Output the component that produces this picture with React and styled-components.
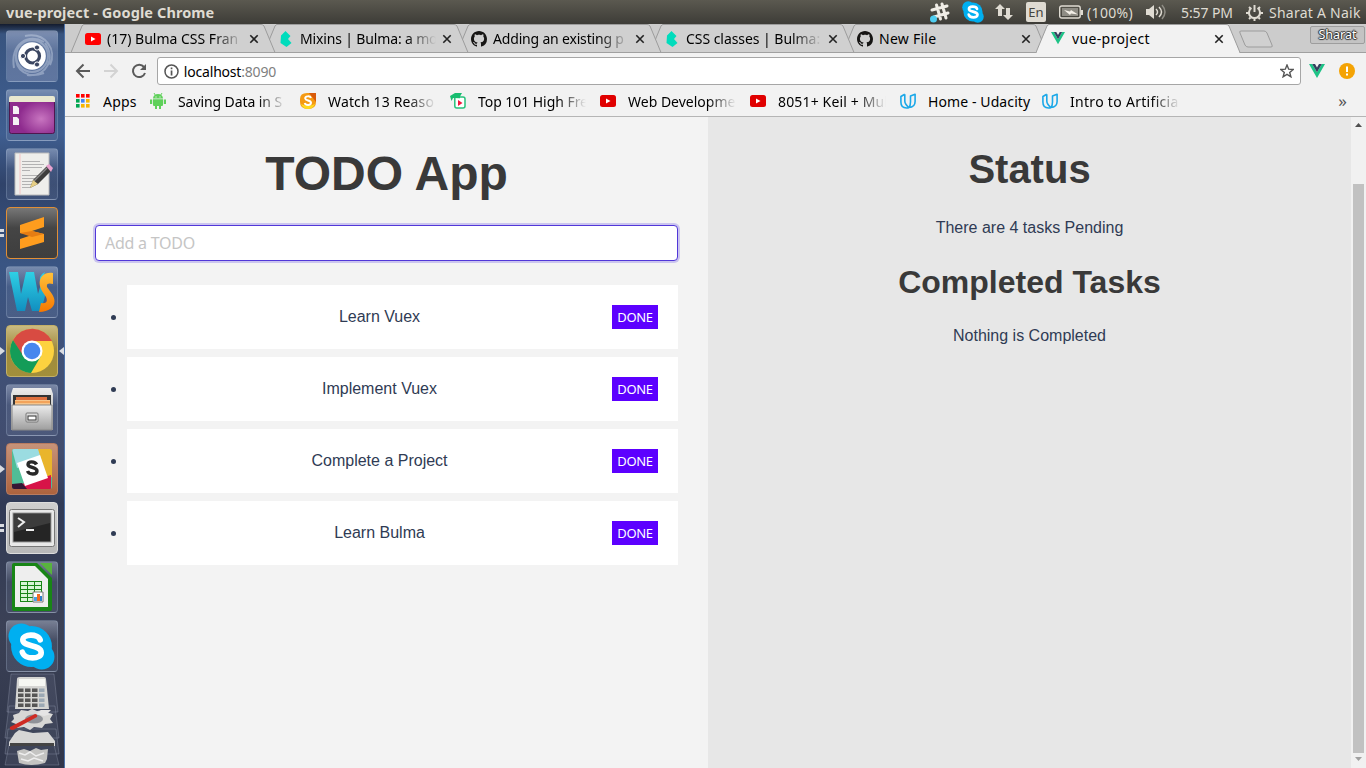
import React from "react";
import styled, { createGlobalStyle } from "styled-components";

const Global = createGlobalStyle`
  * { box-sizing: border-box; }
  html, body { margin: 0; padding: 0; overflow: hidden; }
  body { width: 1366px; height: 768px; font-family: "Noto Sans", "Open Sans", sans-serif; }
  svg { display: block; flex: none; }
`;

const Desktop = styled.div`
  width: 1366px; height: 768px; display: flex; flex-direction: column; overflow: hidden;
`;
const MenuBar = styled.header`
  height: 24px; flex: none; display: flex; align-items: center; padding: 0 5px 0 6px;
  background: linear-gradient(#5b5950, #3d3c37); color: #dfdbd2; font-size: 14px; white-space: nowrap;
`;
const WindowTitle = styled.div`
  font-weight: 700; flex: 1; letter-spacing: 0.1px; font-size: 14.5px; line-height: 24px;
`;
const Indicator = styled.div`
  display: flex; align-items: center; margin-left: ${(p) => p.$gap}px;
  width: ${(p) => p.$w}px; letter-spacing: ${(p) => p.$ls || 0}px; font-size: 14px;
`;
const Keyboard = styled.div`
  width: 20px; height: 20px; margin-left: 13px; border-radius: 2px; background: #dfdbd2; color: #45443e;
  font-size: 13px; line-height: 21px; text-align: center;
`;
const Body = styled.div`display: flex; flex: 1; min-height: 0;`;

const Launcher = styled.nav`
  width: 65px; flex: none; display: flex; flex-direction: column; align-items: center; padding: 6px 1px 0 0;
  gap: 7px; overflow: hidden; border-right: 1px solid #4c72aa;
  background: linear-gradient(#141c2e 0, #38547f 10px, #3f5e90 110px, #30436a 160px, #3a5583 240px, #405076 350px, #414c6d 430px, #303a56 480px, #3b4156 600px, #30364a 744px);
`;
const Tile = styled.div`
  position: relative; width: 52px; height: 52px; flex: none; border-radius: 4px;
  border: 1px solid ${(p) => p.$edge || "rgba(190,205,230,.24)"};
  background: ${(p) => p.$bg || "linear-gradient(rgba(205,215,235,.42), rgba(140,155,185,.14) 40%, rgba(140,155,185,.16))"};
  display: flex; align-items: center; justify-content: center;
`;
const Running = styled.i`
  position: absolute; left: -7px; top: 21px; width: 0; height: 0;
  border: 4px solid transparent; border-left: 5px solid #d9dce2; border-right: 0;
`;
const Focused = styled(Running)`
  left: auto; right: -7px; border-left: 0; border-right: 5px solid #d9dce2;
`;
const Windows = styled.i`
  position: absolute; left: -7px; top: 21px; width: 4px; height: 8px;
  border-top: 3px solid #d9dce2; border-bottom: 3px solid #d9dce2;
`;
const Stack = styled.div`margin-top: -6px;`;

const Browser = styled.main`flex: 1; display: flex; flex-direction: column; min-width: 0;`;
const TabStrip = styled.div`
  position: relative; height: 29px; flex: none; display: flex; background: #cccccc; padding-left: 6px;
  box-shadow: inset 0 -1px #a0a0a0;
`;
const TabBox = styled.div`
  position: relative; z-index: ${(p) => p.$z}; width: 205px; height: 29px; margin-right: -12px; flex: none;
  display: flex; align-items: center; padding: 0 16px 0 14px;
`;
const TabShape = styled.svg`position: absolute; left: 0; top: 0;`;
const Favicon = styled.div`position: relative; width: 16px; margin-right: 6px; display: flex; justify-content: center;`;
const fade = (from) => `-webkit-mask-image: linear-gradient(90deg, #000 ${from}, transparent);`;
const TabTitle = styled.div`
  position: relative; width: 136px; overflow: hidden; white-space: nowrap; color: #000; font-size: 14px;
  letter-spacing: ${(p) => p.$ls}px; ${(p) => (p.$fade ? fade("78%") : "")}
`;
const Cross = styled.svg`position: relative; margin-left: 6px;`;
const NewTab = styled.svg`margin: 6px 0 0 9px;`;
const Profile = styled.div`
  margin: 2px 1px 0 auto; width: 55px; height: 18px; border: 1px solid #9d9d9d; border-radius: 2px; background: #c3c3c3;
  font-size: 12.5px; line-height: 16px; text-align: center; color: #fff;
  text-shadow: 0 0 1px #333, 1px 0 1px #333, -1px 0 1px #333, 0 1px 1px #333, 0 -1px 1px #333;
`;
const Toolbar = styled.div`
  height: 35px; flex: none; display: flex; align-items: center; background: #f2f2f2; padding: 1px 10px 0;
`;
const NavIcons = styled.div`display: flex; gap: 12px; width: 82px;`;
const Address = styled.div`
  width: 1146px; height: 28px; border: 1px solid #a6a6a6; border-radius: 3px; background: #fff;
  display: flex; align-items: center; padding: 0 6px; margin-right: 8px;
`;
const Url = styled.div`
  flex: 1; margin-left: 5px; font-size: 14px; letter-spacing: -0.2px; color: #000;
  span { color: #808080; }
`;
const Bookmarks = styled.div`
  height: 29px; flex: none; display: flex; align-items: center; background: #f2f2f2; padding: 0 19px 2px 11px;
  border-bottom: 1px solid #b5b5b5; white-space: nowrap; font-size: 14px; color: #000;
`;
const Bookmark = styled.div`
  display: flex; align-items: center; gap: ${(p) => p.$inner || 12}px; margin-right: ${(p) => p.$gap}px; height: 26px;
`;
const BookmarkText = styled.div`
  width: ${(p) => p.$w}px; overflow: hidden; letter-spacing: ${(p) => p.$ls}px; ${(p) => (p.$fade ? fade("74%") : "")}
`;
const More = styled.div`margin-left: auto; color: #555; font-size: 17px; line-height: 24px;`;

const Page = styled.div`
  flex: 1; min-height: 0; display: flex; font-family: "Liberation Sans", Arial, sans-serif; font-size: 16px; line-height: 24px;
  color: #2f3b54; text-align: center; letter-spacing: 0;
`;
const Panel = styled.section`
  width: 643px; flex: none; padding: ${(p) => p.$top}px 30px 0; background: ${(p) => p.$bg};
`;
const Title = styled.h1`margin: 0; color: #393939; font-size: 48px; line-height: 54px; font-weight: 600;`;
const Subtitle = styled.h2`
  margin: 0; color: #393939; font-weight: 600; font-size: ${(p) => p.$size}px; line-height: ${(p) => p.$line}px;
`;
const Message = styled.p`margin: ${(p) => p.$m};`;
const Input = styled.input`
  display: block; width: 100%; height: 36px; margin-top: 24px; padding: 0 9px; border: 1px solid #5137d8; border-radius: 4px;
  outline: none; box-shadow: 0 0 0 2px #cbc5ef; background: #fff; font: 16px "Noto Sans", sans-serif; letter-spacing: -0.25px;
  &::placeholder { color: #c5c5c5; opacity: 1; }
`;
const List = styled.ul`
  margin: 24px 0 0 32px; padding: 0; display: flex; flex-direction: column; gap: 8px; list-style: none;
`;
const Item = styled.li`
  position: relative; height: 64px; padding: 20px; background: #fff; display: flex; align-items: center;
  &::before { content: ""; position: absolute; left: -16px; top: 30px; width: 5px; height: 5px; border-radius: 50%; background: #2f3b54; }
`;
const Label = styled.span`flex: 1;`;
const Done = styled.button`
  width: 46px; height: 24px; padding: 0; border: 0; background: #5c00ff; color: #fff;
  font: 13px "Noto Sans", sans-serif; letter-spacing: -0.3px;
`;
const Scrollbar = styled.div`
  width: 15px; background: #f1f1f1; display: flex; flex-direction: column; align-items: center; padding: 5px 0 4px;
`;
const Thumb = styled.div`width: 11px; height: 569px; margin: 57px 0 4px; background: #c1c1c1;`;

const YouTube = ({ c = "#f00" }) => (
  <svg width="16" height="12" viewBox="0 0 16 12"><rect width="16" height="12" rx="2.5" fill={c} /><path d="M6 3.5v5L10.5 6z" fill="#fff" /></svg>
);
const BulmaIcon = () => (
  <svg width="12" height="16" viewBox="0 0 12 16"><path d="M5.500 0 10.500 5 8 8l3.500 4-5 4L.5 12 1 4.500z" fill="#00dcbc" /></svg>
);
const GitHub = () => (
  <svg width="16" height="16" viewBox="0 0 16 16"><path fill="#161514" d="M8 0C3.580 0 0 3.580 0 8c0 3.540 2.290 6.530 5.470 7.590.4.070.55-.17.55-.38 0-.19-.01-.82-.01-1.490-2.010.37-2.530-.49-2.690-.94-.09-.23-.48-.94-.82-1.130-.28-.15-.68-.52-.01-.53.63-.01 1.080.58 1.230.82.72 1.210 1.870.87 2.330.66.070-.52.28-.87.51-1.070-1.780-.2-3.640-.89-3.640-3.950 0-.87.31-1.590.82-2.150-.08-.2-.36-1.020.08-2.120 0 0 .67-.21 2.200.82.64-.18 1.320-.27 2-.27s1.360.09 2 .27c1.530-1.040 2.200-.82 2.200-.82.44 1.100.16 1.920.08 2.120.51.56.82 1.270.82 2.150 0 3.070-1.870 3.750-3.650 3.950.29.25.54.73.54 1.480 0 1.070-.01 1.930-.01 2.200 0 .21.15.46.55.38A8 8 0 0 0 16 8c0-4.420-3.580-8-8-8z" /></svg>
);
const Vue = ({ size = 16 }) => (
  <svg width={size} height={size * 0.875} viewBox="0 0 16 14"><path d="M0 0h3.200L8 8.300 12.800 0H16L8 14z" fill="#1dc386" /><path d="M3.200 0H6l2 3.500L10 0h2.800L8 8.300z" fill="#35405e" /></svg>
);
const Udacity = () => (
  <svg width="16" height="16" viewBox="0 0 16 16" fill="none" stroke="#1ba8e8" strokeWidth="1.600" strokeLinejoin="round"><path d="M4.800 1.200.9 3.500V9c0 4 2.300 6 5.600 6 .9 0 1.700-.2 2.300-.5M4.800 1.200V8c0 2.500 1.300 4.200 4 6.500" /><path d="M15.100 1.200 10.500 3v6c0 2.600-.6 4.500-1.700 5.500 4.200-.3 6.300-2.600 6.300-6z" /></svg>
);
const SkypeMark = ({ size }) => (
  <svg width={size} height={size} viewBox="0 0 46 46"><circle cx="13" cy="13" r="12.500" fill="#00aff0" /><circle cx="33" cy="33" r="12.500" fill="#00aff0" /><circle cx="23" cy="23" r="20" fill="#00aff0" /><path d="M31.500 16.500c-2-6.500-17-6-17 0 0 7.500 18 4 18 12.500 0 7-16.500 7-18.500-.5" fill="none" stroke="#fff" strokeWidth="5.500" strokeLinecap="round" /></svg>
);

const tabs = [
  { title: "(17) Bulma CSS Fran", icon: <YouTube />, cut: true, ls: 0 },
  { title: "Mixins | Bulma: a mo", icon: <BulmaIcon />, cut: true, ls: -0.15 },
  { title: "Adding an existing p", icon: <GitHub />, cut: true, ls: -0.18 },
  { title: "CSS classes | Bulma:", icon: <BulmaIcon />, cut: true, ls: -0.05 },
  { title: "New File", icon: <GitHub />, ls: 0.25 },
  { title: "vue-project", icon: <Vue size={14} />, active: true, ls: 0.35 },
];

const Tab = ({ tab, index }) => (
  <TabBox $z={tab.active ? 10 : 9 - index}>
    <TabShape width="205" height="29">
      <path d="M0 28.500 11 2Q12 .5 13 .5H190Q192 .5 193 2L204 28.500" fill={tab.active ? "#f2f2f2" : "#d0d0d0"} stroke="#9c9c9c" />
      {tab.active ? <path d="M1 28.500H203" stroke="#f2f2f2" /> : <path d="M0 28.500H205" stroke="#a0a0a0" />}
    </TabShape>
    <Favicon>{tab.icon}</Favicon>
    <TabTitle $fade={tab.cut} $ls={tab.ls}>{tab.title}</TabTitle>
    <Cross width="10" height="10" viewBox="0 0 10 10"><path d="m1.300 1.300 7.400 7.400m0-7.400-7.400 7.400" stroke="#222" strokeWidth="1.600" /></Cross>
  </TabBox>
);

const Apps = () => (
  <svg width="14" height="14">
    {["#f00", "#f00", "#f00", "#00a651", "#4285f4", "#f7b500", "#00a651", "#f7b500", "#f7b500"].map((c, i) => (
      <rect key={i} x={(i % 3) * 5} y={Math.floor(i / 3) * 5} width="3.600" height="3.600" fill={c} />
    ))}
  </svg>
);
const Android = () => (
  <svg width="16" height="16" viewBox="0 0 16 16" fill="#5fd05a"><path d="M3 5.500a5 4.500 0 0 1 10 0zM3 6.200h10V12q0 1-1 1h-1v3H9v-3H7v3H5v-3H4q-1 0-1-1zM0 6.500h2.200V11H0zM13.800 6.500H16V11h-2.200z" /><path d="m4 0 1.500 2.500M12 0l-1.500 2.500" stroke="#5fd05a" /><path d="M5.500 3.500h1v1h-1zM9.500 3.500h1v1h-1z" fill="#fff" /></svg>
);
const Scoop = () => (
  <svg width="16" height="16" viewBox="0 0 16 16"><path d="M0 6Q0 0 7 0h9v9q0 7-8 7T0 9z" fill="#f59a12" /><path d="M9 0h7v9z" fill="#d95a0a" /><path d="M1 11q7 3 14 0-2 5-7 5t-7-5z" fill="#ffd91f" /><path d="M11 5C10 2.500 5 3 5.200 5.500 5.500 8 11 7 11 9.800c0 3-5.500 2.700-6.300.2" fill="none" stroke="#fff" strokeWidth="2" /></svg>
);
const Course = () => (
  <svg width="16" height="16" viewBox="0 0 16 16"><path d="M4.800 5V13q0 2 2 2H13q2 0 2-2V6q0-2-2-2H9" fill="#fff" stroke="#27c17b" strokeWidth="1.500" /><path d="m0 3 5-3h7l-2 3.500v1.800L3 5 1.500 8z" fill="#17bd70" /><path d="M8 7v6l4.500-3z" fill="#f5143c" /></svg>
);

const bookmarks = [
  { t: "Apps", i: <Apps />, w: 35, gap: 12, inner: 13, ls: 0.2 },
  { t: "Saving Data in S", i: <Android />, w: 108, gap: 14, ls: -0.08, cut: true },
  { t: "Watch 13 Reaso", i: <Scoop />, w: 108, gap: 14, ls: 0.15, cut: true },
  { t: "Top 101 High Fre", i: <Course />, w: 108, gap: 14, ls: -0.05, cut: true },
  { t: "Web Developme", i: <YouTube c="#e00000" />, w: 108, gap: 14, ls: 0, cut: true },
  { t: "8051+ Keil + Mul", i: <YouTube c="#e00000" />, w: 108, gap: 14, ls: 0.15, cut: true },
  { t: "Home - Udacity", i: <Udacity />, w: 104, gap: 10, ls: 0.1 },
  { t: "Intro to Artificia", i: <Udacity />, w: 110, gap: 0, ls: 0.3, cut: true },
];

const UbuntuIcon = () => (
  <svg width="50" height="50" viewBox="0 0 50 50"><rect width="50" height="50" rx="3" fill="#8d9ac0" opacity=".35" /><g fill="none" stroke="#d5dfef" opacity=".4"><path d="M7 37C3 12 22 2 37 11M20 44c20 2 29-17 18-32M18 5c21-4 32 14 25 29M9 24C8 40 21 48 37 42" strokeWidth="2" /><circle cx="25" cy="25" r="16" strokeWidth="2" /></g><circle cx="25" cy="25" r="13.800" fill="#fff" /><circle cx="25.500" cy="25" r="7" fill="none" stroke="#3b4661" strokeWidth="3.200" /><g fill="#3b4661" stroke="#fff" strokeWidth="1"><circle cx="16" cy="25" r="2.600" /><circle cx="30" cy="16.500" r="2.600" /><circle cx="30" cy="33.500" r="2.600" /></g></svg>
);
const DesktopIcon = () => (
  <svg width="46" height="38" viewBox="0 0 46 38"><defs><radialGradient id="plum" cx=".7" cy=".6"><stop stopColor="#c875c0" /><stop offset="1" stopColor="#8e2b8e" /></radialGradient></defs><rect x=".5" y="1" width="45" height="36.500" rx="2" fill="url(#plum)" stroke="#4e174e" /><path d="M0 6V2q0-2 2-2h42q2 0 2 2v4z" fill="#e9e8d0" /><path d="M4 10h4l2 2v6H4zM4 21h4l2 2v6H4z" fill="#f5f0f5" /></svg>
);
const EditorIcon = () => (
  <svg width="44" height="44" viewBox="0 0 44 44"><path d="M5 1h34v42H5z" fill="#eeeeeb" stroke="#bbb" /><path d="M10 2v40" stroke="#f4c4c4" /><path d="M12 9.500h18M12 12.500h22M12 15.500h20M12 18.500h8M12 23.500h17M12 26.500h15M12 29.500h10M12 32.500h12M12 35.500h8" stroke="#b2b2b2" /><path d="m20 36 3-8 14-14 5 4-14 14z" fill="#3e3e3c" /><path d="m24 29 13-13" stroke="#888" strokeWidth="1.500" /><path d="m20 36 3-8 5 4z" fill="#e6cf85" /><path d="m36 14 3-2 4 4-2 4z" fill="#e8a2cf" /></svg>
);
const SublimeIcon = () => (
  <svg width="28" height="34" viewBox="0 0 28 34"><path d="M2 9 26 1v10l-12 4 12 3v8L2 33V23l12-4L2 17z" fill="#ff9d1e" /><path d="m2 17 12-2 12 3-12 3z" fill="#e67d13" /></svg>
);
const WebStormIcon = () => (
  <svg width="48" height="42" viewBox="0 0 48 42"><defs><linearGradient id="aqua" x2="0" y2="1"><stop stopColor="#2fd0e5" /><stop offset="1" stopColor="#118fc0" /></linearGradient><linearGradient id="amber" x2="0" y2="1"><stop stopColor="#ffc13a" /><stop offset="1" stopColor="#f77800" /></linearGradient></defs><path d="M1 1h9l3 22 5-22h8l4 22 3-10q-4-8 4-12-4 8 0 14 2 10-5 25h-8l-4-14-3 14H9z" fill="url(#aqua)" /><path d="M45 2v11q-7-2-6 3l5 7c6 9 1 18-13 18l2-9q8 1 5-6l-4-6C28 10 34 0 45 2z" fill="url(#amber)" /></svg>
);
const ChromeIcon = () => (
  <svg width="46" height="46" viewBox="0 0 46 46"><circle cx="23" cy="23" r="22" fill="#fdd23f" /><path d="M4 12A22 22 0 0 1 43 13H23L13.500 29z" fill="#d84b42" /><path d="M4 12a22 22 0 0 0 18 33l10-17-17 1z" fill="#149c58" /><circle cx="23" cy="23" r="10.500" fill="#fff" /><circle cx="23" cy="23" r="8.300" fill="#4787ee" /></svg>
);
const FilesIcon = () => (
  <svg width="42" height="44" viewBox="0 0 42 44"><defs><linearGradient id="steel" x2="0" y2="1"><stop stopColor="#ededed" /><stop offset="1" stopColor="#9e9e9e" /></linearGradient></defs><path d="m2 0-2 6v36h42V6l-2-6z" fill="url(#steel)" /><path d="M2 7h38v11H2z" fill="#343434" /><path d="M5 9h31v8H5z" fill="#de703e" /><path d="M4 12h35v5H4z" fill="#f7c58b" /><path d="M4 14h35" stroke="#ed812d" /><path d="M1 17h40v25H1z" fill="url(#steel)" stroke="#888" /><rect x="15" y="25" width="12" height="9" rx="1" fill="#ddd" stroke="#777" /><rect x="17" y="28" width="8" height="4" fill="#fff" stroke="#333" /></svg>
);
const SlackIcon = () => (
  <svg width="40" height="40" viewBox="0 0 40 40"><clipPath id="slack"><rect width="40" height="40" rx="2" /></clipPath><g clipPath="url(#slack)"><path d="M0 0h40v40H0z" fill="#50bd96" /><path d="M0 0h27l4 11L5 19z" fill="#9bdce1" /><path d="M26 0h14v28l-5 1z" fill="#e9b52c" /><path d="m10 35 29-9v14H9z" fill="#d71348" /><path d="m0 35 10-1 5 6H0z" fill="#351835" /><path d="m5 14 23-8 8 23-23 8z" fill="#fff" /></g><path d="M24.500 15.500c-1.500-3.500-8.500-3.500-8.500 0s9 2.500 9 6.500-8 4-9.500 0" fill="none" stroke="#292929" strokeWidth="3.400" /></svg>
);
const TerminalIcon = () => (
  <svg width="46" height="38" viewBox="0 0 46 38"><rect x=".5" y=".5" width="45" height="37" rx="2" fill="#e8e8e8" stroke="#777" /><rect x="4" y="4" width="38" height="29" fill="#252525" stroke="#999" /><path d="M5 5h36v9L5 23z" fill="#3c3c3c" /><path d="m9 9 6 4-6 5M17 21h8" fill="none" stroke="#eee" strokeWidth="2" /></svg>
);
const CalcIcon = () => (
  <svg width="40" height="48" viewBox="0 0 40 48"><path d="M0 2q0-2 2-2h23l15 15v31q0 2-2 2H2q-2 0-2-2z" fill="#188516" /><path d="M3 3h20l13 13v28H3z" fill="#eee" /><path d="M28 0h12v12z" fill="#58b33e" /><path d="M8 18h22v21H8z" fill="#188516" />{[0, 1, 2, 3, 4].map((r) => [0, 1, 2].map((c) => <rect key={r + "-" + c} x={9 + c * 7} y={19 + r * 4} width="6" height="3" fill="#d8f5d6" />))}<path d="M21 29h10v10H21z" fill="#fff" stroke="#777" /><path d="M22 34h3v4h-3z" fill="#48a2e5" /><path d="M25 31h3v7h-3z" fill="#f36b21" /><path d="M28 33h2v5h-2z" fill="#2e80cb" /></svg>
);
const StackIcon = () => (
  <svg width="58" height="98" viewBox="0 0 58 98"><g fill="#9aa8bf" fillOpacity=".12" stroke="#bbc5d6" strokeOpacity=".25"><path d="M8 1h43l4 38H4zM6 33h46l4 32H2zM5 56h48l3 25H2zM6 72h45l5 20H2z" /></g><path d="M14 6q0-2 3-2h24q2 0 2 2l3 30H12z" fill="#d5d5d3" /><path d="M16 6h26v7H16z" fill="#f6f7f3" /><g>{[0, 1, 2, 3].map((r) => [0, 1, 2, 3].map((c) => <rect key={r + "-" + c} x={15 + c * 7} y={15.500 + r * 5} width="5.500" height="3.500" fill={c === 3 ? "#9ba8b4" : "#555"} />))}</g><path d="m10 42 6-2 2-3 7 1 4-2 5 2 6-1 3 3 7 1-3 5 3 4-8 1-3 4-8-1-4 3-6-3-7 1-1-4-5-2 3-3z" fill="#d7d7d5" /><ellipse cx="31" cy="46" rx="9" ry="4.500" fill="#8f9298" /><path d="m7 54 25-13q3 0 2 3L10 57q-4 0-3-3z" fill="#cf2b23" /><path d="m33 41 5-4h10l-3 3 4 1-8 2z" fill="#e5e5e5" /><path d="m12 60-6 9v4h46v-5l-7-9-15 1-14-3z" fill="#d6d6d5" /><path d="M7 70h44v3H7z" fill="#444" /><path d="m14 78 7-2 6 2 6-3 5 2 7-1-1 10-2 4q-14 4-26 0z" fill="#c4c4c2" /><path d="m16 80 6 2 5-3 6 4 8-3M18 86l7 2 6-3 9 3" fill="none" stroke="#eee" strokeWidth="1.500" /></svg>
);

const tiles = [
  { i: <UbuntuIcon /> }, { i: <DesktopIcon /> }, { i: <EditorIcon /> },
  { i: <SublimeIcon />, bg: "linear-gradient(#777,#454545 40%,#3e3e3e)", edge: "#e18f36", m: "windows" },
  { i: <WebStormIcon /> },
  { i: <ChromeIcon />, bg: "linear-gradient(#cabb82,#a08b3e 45%,#a28f3a)", edge: "#c3b067", m: "focused" },
  { i: <FilesIcon /> },
  { i: <SlackIcon />, bg: "linear-gradient(#c79379,#ad633e)", edge: "#b77b60", m: "running" },
  { i: <TerminalIcon />, bg: "linear-gradient(#cfcfcf,#b8b8b8)", edge: "#ddd", m: "windows" },
  { i: <CalcIcon /> }, { i: <SkypeMark size={47} /> },
];
const tasks = ["Learn Vuex", "Implement Vuex", "Complete a Project", "Learn Bulma"];

export default function App() {
  return (
    <Desktop>
      <Global />
      <MenuBar>
        <WindowTitle>vue-project - Google Chrome</WindowTitle>
        <svg width="21" height="21" viewBox="0 0 21 21"><path d="m7.500 3 4 14M13 2l4 14M3 8l15-4M5 15l14-4" stroke="#f0ede6" strokeWidth="3" strokeLinecap="round" /><circle cx="4.500" cy="17" r="3.500" fill="#4fcdf0" /></svg>
        <Indicator $gap={12} $w={22}><SkypeMark size={22} /></Indicator>
        <Indicator $gap={11} $w={18}><svg width="18" height="18" fill="#dfdbd2"><path d="M5 1 0 6h3v7h4V6h3zM11 5h4v7h3l-5 5-5-5h3z" /></svg></Indicator>
        <Keyboard>En</Keyboard>
        <Indicator $gap={13} $w={24}><svg width="24" height="14" viewBox="0 0 24 14"><rect x=".7" y="1" width="20.500" height="12" rx="2" fill="none" stroke="#dfdbd2" strokeWidth="1.400" /><path d="M22 5h2v5h-2z" fill="#dfdbd2" /><path d="M3 3h16v8H3z" fill="#8e8c84" /><path d="m5 5 6 1.500L12 5l7 4.500-7-1L11 10z" fill="#f3efe7" /></svg></Indicator>
        <Indicator $gap={4} $w={47} $ls={0.35}>(100%)</Indicator>
        <Indicator $gap={12} $w={21}><svg width="21" height="18" viewBox="0 0 21 18"><path d="M0 6h3l5-4v14l-5-4H0z" fill="#dfdbd2" /><path d="M10 6q3 3 0 6M13 4q5 5 0 10" fill="none" stroke="#dfdbd2" strokeWidth="1.500" /><path d="M16 2q6 7 0 14" fill="none" stroke="#8e8c84" strokeWidth="1.500" /></svg></Indicator>
        <Indicator $gap={14} $w={54} $ls={-0.1}>5:57 PM</Indicator>
        <Indicator $gap={11} $w={17}><svg width="17" height="17" viewBox="0 0 17 17" fill="none" stroke="#dfdbd2"><path d="M5.500 4a5.500 5.500 0 1 0 6 0" strokeWidth="2" /><path d="M8.500 1v7" strokeWidth="2" /><path d="m3 3 1.500 1.500M14 3l-1.500 1.500M0 9h3M14 9h3M3 15l1.500-1.500M14 15l-1.500-1.500M8.500 14v3" strokeWidth="2" /></svg></Indicator>
        <Indicator $gap={6} $w={92} $ls={0.25}>Sharat A Naik</Indicator>
      </MenuBar>
      <Body>
        <Launcher>
          {tiles.map((t, n) => (
            <Tile key={n} $bg={t.bg} $edge={t.edge}>
              {t.m === "windows" && <Windows />}
              {(t.m === "running" || t.m === "focused") && <Running />}
              {t.m === "focused" && <Focused />}
              {t.i}
            </Tile>
          ))}
          <Stack><StackIcon /></Stack>
        </Launcher>
        <Browser>
          <TabStrip>
            {tabs.map((t, n) => <Tab key={n} tab={t} index={n} />)}
            <NewTab width="36" height="18"><path d="M3 1h23q2 0 3 2l5 12q1 2-1 2H10q-2 0-3-2L2 3q-1-2 1-2z" fill="#d0d0d0" stroke="#9c9c9c" /></NewTab>
            <Profile>Sharat</Profile>
          </TabStrip>
          <Toolbar>
            <NavIcons>
              <svg width="16" height="16" viewBox="0 0 16 16" fill="none" stroke="#5a5a5a" strokeWidth="2"><path d="M15 8H2m6.500-6.500L2 8l6.500 6.500" /></svg>
              <svg width="16" height="16" viewBox="0 0 16 16" fill="none" stroke="#d3d3d3" strokeWidth="2"><path d="M1 8h13M7.500 1.500 14 8l-6.500 6.500" /></svg>
              <svg width="16" height="16" viewBox="0 0 16 16"><path d="M13 4A6.200 6.200 0 1 0 14 10" fill="none" stroke="#5a5a5a" strokeWidth="2" /><path d="M15 1v6H9z" fill="#5a5a5a" /></svg>
            </NavIcons>
            <Address>
              <svg width="15" height="15" viewBox="0 0 15 15"><circle cx="7.500" cy="7.500" r="6.500" fill="none" stroke="#555" strokeWidth="1.500" /><path d="M6.700 3.500h1.700v1.700H6.700zM6.700 6.500h1.700v5H6.700z" fill="#555" /></svg>
              <Url>localhost<span>:8090</span></Url>
              <svg width="14" height="14" viewBox="0 0 14 14"><path d="m7 1 1.700 4.200 4.500.3-3.500 2.900 1.200 4.400L7 10.400l-3.900 2.400 1.200-4.400L.8 5.500l4.500-.3z" fill="none" stroke="#555" strokeWidth="1.400" /></svg>
            </Address>
            <Vue />
            <svg width="31" height="16" viewBox="0 0 31 16"><circle cx="22" cy="8" r="8" fill="#f4a304" /><path d="M21 3.500h2v5.500h-2zM21 10.500h2v2h-2z" fill="#fff" /></svg>
          </Toolbar>
          <Bookmarks>
            {bookmarks.map((b) => (
              <Bookmark key={b.t} $gap={b.gap} $inner={b.inner}>{b.i}<BookmarkText $w={b.w} $ls={b.ls} $fade={b.cut}>{b.t}</BookmarkText></Bookmark>
            ))}
            <More>»</More>
          </Bookmarks>
          <Page>
            <Panel $bg="#f3f3f3" $top={30}>
              <Title>TODO App</Title>
              <Input placeholder="Add a TODO" />
              <List>
                {tasks.map((t) => <Item key={t}><Label>{t}</Label><Done>DONE</Done></Item>)}
              </List>
            </Panel>
            <Panel $bg="#e7e7e7" $top={30}>
              <Subtitle $size={40} $line={45}>Status</Subtitle>
              <Message $m="24px 0">There are 4 tasks Pending</Message>
              <Subtitle $size={32} $line={36}>Completed Tasks</Subtitle>
              <Message $m="24px 0">Nothing is Completed</Message>
            </Panel>
            <Scrollbar>
              <svg width="7" height="5"><path d="M0 5 3.500 1 7 5z" fill="#505050" /></svg>
              <Thumb />
              <svg width="7" height="5"><path d="M0 0 3.500 4 7 0z" fill="#a0a0a0" /></svg>
            </Scrollbar>
          </Page>
        </Browser>
      </Body>
    </Desktop>
  );
}
